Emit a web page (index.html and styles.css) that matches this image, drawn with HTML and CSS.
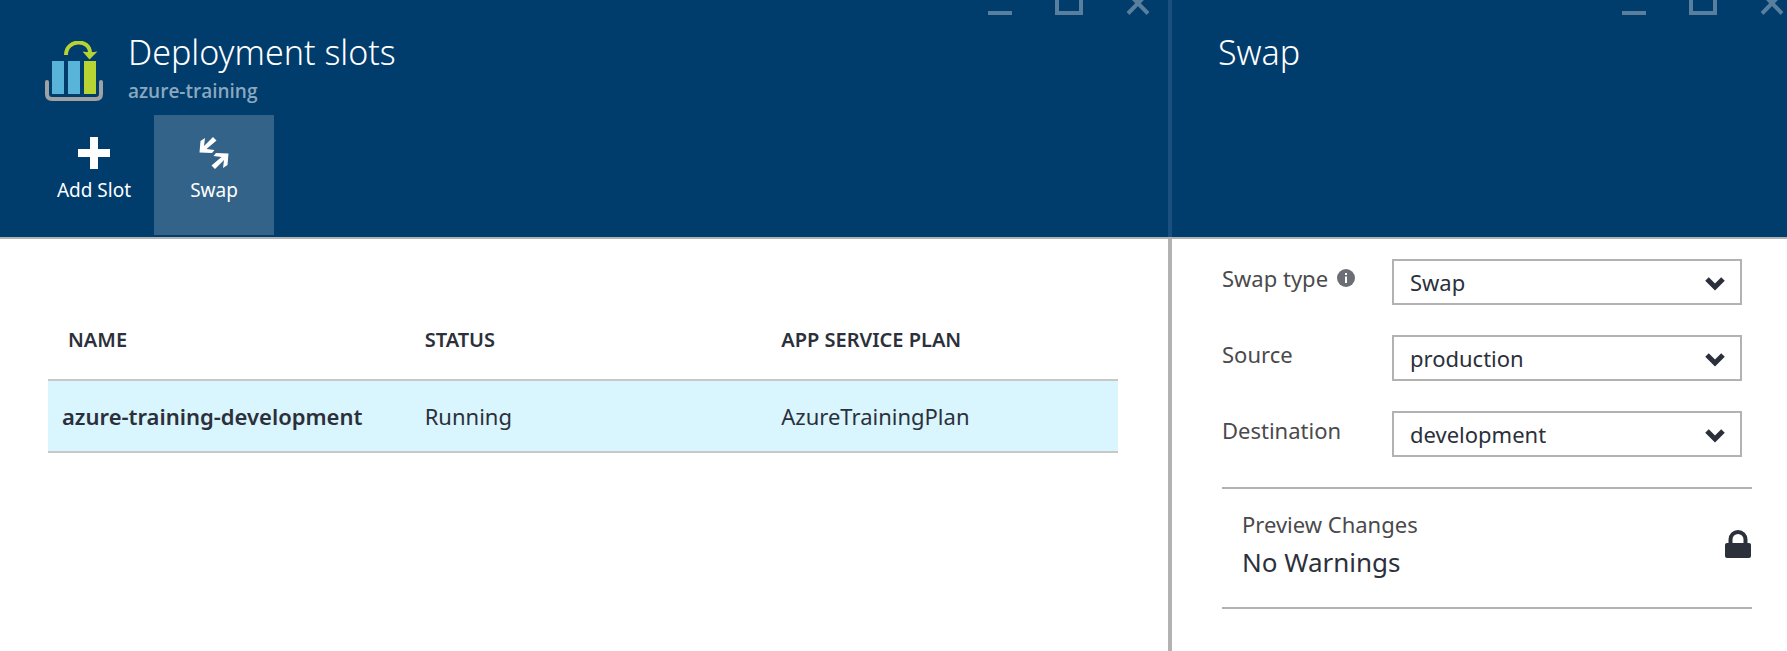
FILE: index.html
```html
<!DOCTYPE html>
<html lang="en">
<head>
<meta charset="utf-8">
<title>Deployment slots</title>
<link rel="stylesheet" href="styles.css">
</head>
<body>
<main class="portal">
  <section class="blade blade-slots" aria-labelledby="slots-title">
    <header class="blade-header">
      <div class="window-controls">
        <button class="window-button" type="button" aria-label="Minimize"><svg width="24" height="15" viewBox="0 0 24 15"><path d="M0 13h24"/></svg></button>
        <button class="window-button" type="button" aria-label="Maximize"><svg width="28" height="15" viewBox="0 0 28 15"><path d="M2 -9V13H26V-9"/></svg></button>
        <button class="window-button" type="button" aria-label="Close"><svg width="24" height="15" viewBox="0 0 24 15"><path d="M2 -7L22 13.500M22 -7L2 13.500"/></svg></button>
      </div>
      <div class="title-row">
        <svg class="slots-icon" width="58" height="62" viewBox="0 0 58 62" aria-hidden="true">
          <path d="M2 41V53Q2 58 7 58H51Q56 58 56 53V41" fill="none" stroke="#a0a1a2" stroke-width="4" stroke-linecap="round"/>
          <path d="M7 20h12v33H7zM23 20h12v33H23z" fill="#59b4d9"/>
          <path d="M39 20h12v33H39z" fill="#b8d432"/>
          <path d="M21 14C21 -2 45 -2.500 45 12" fill="none" stroke="#b8d432" stroke-width="4"/>
          <path d="M37.500 10.500Q45 12 52.500 10.500L44.500 18.500z" fill="#b8d432"/>
        </svg>
        <div>
          <h1 class="blade-title" id="slots-title">Deployment slots</h1>
          <p class="blade-subtitle">azure-training</p>
        </div>
      </div>
      <div class="toolbar">
        <button class="command" type="button">
          <svg width="32" height="32" viewBox="0 0 32 32" aria-hidden="true"><path d="M12 0h8v12h12v8H20v12h-8V20H0v-8h12z" fill="#fff"/></svg>
          <span>Add Slot</span>
        </button>
        <button class="command command-active" type="button">
          <svg width="32" height="32" viewBox="0 0 32 32" aria-hidden="true"><g fill="#fff"><path d="M15 0L18.500 3.500L8.500 12L16.500 13L14 16L1.500 15.500L2.500 4L7 1L6 9z"/><path d="M17 32L13.500 28.500L23.500 20L15.500 19L18 16L30.500 16.500L29.500 28L25 31L26 23z"/></g></svg>
          <span>Swap</span>
        </button>
      </div>
    </header>
    <div class="blade-body slots-body">
      <table class="slots">
        <thead><tr><th scope="col">NAME</th><th scope="col">STATUS</th><th scope="col">APP SERVICE PLAN</th></tr></thead>
        <tbody><tr><td class="slot-name">azure-training-development</td><td>Running</td><td>AzureTrainingPlan</td></tr></tbody>
      </table>
    </div>
  </section>
  <section class="blade blade-swap" aria-labelledby="swap-title">
    <header class="blade-header">
      <div class="window-controls">
        <button class="window-button" type="button" aria-label="Minimize"><svg width="24" height="15" viewBox="0 0 24 15"><path d="M0 13h24"/></svg></button>
        <button class="window-button" type="button" aria-label="Maximize"><svg width="28" height="15" viewBox="0 0 28 15"><path d="M2 -9V13H26V-9"/></svg></button>
        <button class="window-button" type="button" aria-label="Close"><svg width="24" height="15" viewBox="0 0 24 15"><path d="M2 -7L22 13.500M22 -7L2 13.500"/></svg></button>
      </div>
      <div class="title-row"><h2 class="blade-title" id="swap-title">Swap</h2></div>
    </header>
    <div class="blade-body swap-body">
      <form class="fields">
        <div class="field">
          <label class="field-label" for="swap-type">Swap type
            <svg width="18" height="18" viewBox="0 0 18 18" aria-hidden="true"><circle cx="9" cy="9" r="9" fill="#6b6f75"/><path d="M8 4h2v2H8zM8 7.500h2V14H8z" fill="#fff"/></svg>
          </label>
          <div class="picker">
            <select id="swap-type"><option>Swap</option></select>
            <svg class="chevron" width="20" height="14" viewBox="0 0 20 14" aria-hidden="true"><path d="M2 2L10 10L18 2"/></svg>
          </div>
        </div>
        <div class="field">
          <label class="field-label" for="source">Source</label>
          <div class="picker">
            <select id="source"><option>production</option></select>
            <svg class="chevron" width="20" height="14" viewBox="0 0 20 14" aria-hidden="true"><path d="M2 2L10 10L18 2"/></svg>
          </div>
        </div>
        <div class="field">
          <label class="field-label" for="destination">Destination</label>
          <div class="picker">
            <select id="destination"><option>development</option></select>
            <svg class="chevron" width="20" height="14" viewBox="0 0 20 14" aria-hidden="true"><path d="M2 2L10 10L18 2"/></svg>
          </div>
        </div>
      </form>
      <div class="preview">
        <div>
          <p class="preview-label">Preview Changes</p>
          <p class="preview-value">No Warnings</p>
        </div>
        <svg width="26" height="28" viewBox="0 0 26 28" aria-hidden="true"><path d="M5.500 15V9.500a7.500 7.500 0 0 1 15 0V15" fill="none" stroke="#2b303b" stroke-width="4"/><rect y="13" width="26" height="15" rx="2" fill="#2b303b"/></svg>
      </div>
    </div>
  </section>
</main>
</body>
</html>
```
FILE: styles.css
```css
* { box-sizing: border-box; }

body {
  margin: 0;
  background: #fff;
  color: #2b303b;
  font-family: "Noto Sans", "Open Sans", sans-serif;
  font-size: 22px;
}

h1, h2, p { margin: 0; }
svg { display: block; flex: none; }
button { border: 0; padding: 0; background: none; color: inherit; font: inherit; }

.portal {
  display: grid;
  grid-template-columns: 1168fr 619fr;
  min-height: 100vh;
}

.blade { display: flex; flex-direction: column; min-width: 0; }

.blade-header {
  height: 237px;
  background: #003c6c;
  color: #fff;
}

.blade-body { flex: 1; border-top: 2px solid #b2b2b2; }

.window-controls {
  display: flex;
  justify-content: flex-end;
  gap: 43px;
  height: 15px;
  padding-right: 18px;
}
.window-button path { fill: none; stroke: #597f9f; stroke-width: 4; }

.title-row { display: flex; gap: 25px; padding: 12px 0 0 45px; }
.slots-icon { margin-top: 14px; }
.blade-title { font-size: 34px; font-weight: 300; line-height: 50px; }
.blade-subtitle {
  color: #8ba8bf;
  font-family: "Open Sans", "Noto Sans", sans-serif;
  font-size: 19px;
  font-weight: 600;
  line-height: 28px;
}

.toolbar { display: flex; margin: 10px 0 0 34px; }
.command {
  display: flex;
  flex-direction: column;
  align-items: center;
  gap: 7px;
  width: 120px;
  height: 120px;
  padding-top: 22px;
  font-size: 19px;
  line-height: 28px;
}
.command-active { background: #336389; }

.slots-body { padding: 72px 50px 0 48px; }
.slots { width: 100%; border-collapse: collapse; table-layout: fixed; }
.slots th {
  height: 69px;
  padding: 0 0 11px 20px;
  font-size: 20px;
  font-weight: 600;
  text-align: left;
}
.slots td {
  height: 72px;
  padding: 0 0 0 20px;
  border: solid #c8c8c8;
  border-width: 2px 0;
  background: #d9f5fe;
}
.slots .slot-name { padding-left: 14px; font-weight: 600; }

.blade-swap .blade-header { border-left: 4px solid #1a5080; }
.blade-swap .blade-body { border-left: 4px solid #b2b2b2; }
.blade-swap .window-controls { padding-right: 3px; }
.blade-swap .title-row { padding-left: 46px; }

.swap-body { padding: 20px 35px 0 50px; }
.fields { display: grid; gap: 30px; padding-right: 10px; }
.field { display: grid; grid-template-columns: 170px 1fr; }
.field-label {
  display: flex;
  align-items: center;
  gap: 9px;
  height: 38px;
  color: #4a4a4c;
}
.picker { position: relative; }
.picker select {
  appearance: none;
  display: block;
  width: 100%;
  height: 46px;
  padding: 0 44px 0 16px;
  border: 2px solid #b2b2b2;
  border-radius: 0;
  background: #fff;
  color: #2b303b;
  font: inherit;
}
.chevron {
  position: absolute;
  top: 18px;
  right: 17px;
  pointer-events: none;
}
.chevron path { fill: none; stroke: #2b303b; stroke-width: 5; }

.preview {
  display: flex;
  justify-content: space-between;
  align-items: center;
  height: 122px;
  margin-top: 30px;
  padding: 0 1px 8px 20px;
  border: solid #b2b2b2;
  border-width: 2px 0;
}
.preview-label { color: #4a4a4c; line-height: 36px; }
.preview-value { font-size: 26px; line-height: 40px; }
```
